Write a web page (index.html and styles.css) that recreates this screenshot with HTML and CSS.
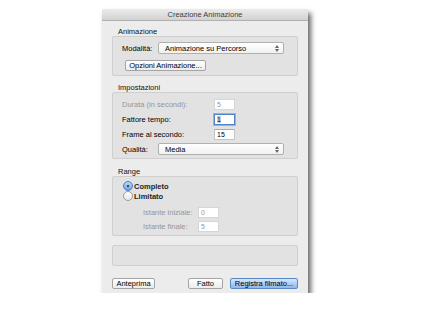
FILE: index.html
```html
<!DOCTYPE html>
<html lang="it">
<head>
    <meta charset="UTF-8">
    <title>Creazione Animazione</title>
    <link rel="stylesheet" href="styles.css">
</head>
<body>

    <div class="dialog">
        <div class="titlebar">Creazione Animazione</div>

        <div class="content">
            <div class="group-label">Animazione</div>
            <div class="group group-anim">
                <div class="row">
                    <span class="lbl lbl-short">Modalità:</span>
                    <div class="popup">
                        <span>Animazione su Percorso</span>
                        <svg class="arrows" width="4" height="7" viewBox="0 0 4 7"><path d="M0 3 L2 0 L4 3 Z M0 4 L2 7 L4 4 Z" fill="#666"/></svg>
                    </div>
                </div>
                <div class="btn btn-options">Opzioni Animazione...</div>
            </div>

            <div class="group-label">Impostazioni</div>
            <div class="group group-settings">
                <div class="row">
                    <span class="lbl lbl-long disabled">Durata (in secondi):</span>
                    <div class="field disabled">5</div>
                </div>
                <div class="row">
                    <span class="lbl lbl-long">Fattore tempo:</span>
                    <div class="field focused"><span class="sel">1</span></div>
                </div>
                <div class="row">
                    <span class="lbl lbl-long">Frame al secondo:</span>
                    <div class="field">15</div>
                </div>
                <div class="row">
                    <span class="lbl lbl-short">Qualità:</span>
                    <div class="popup">
                        <span>Media</span>
                        <svg class="arrows" width="4" height="7" viewBox="0 0 4 7"><path d="M0 3 L2 0 L4 3 Z M0 4 L2 7 L4 4 Z" fill="#666"/></svg>
                    </div>
                </div>
            </div>

            <div class="group-label">Range</div>
            <div class="group group-range">
                <div class="radio-row">
                    <span class="radio checked"></span>
                    <span>Completo</span>
                </div>
                <div class="radio-row">
                    <span class="radio"></span>
                    <span>Limitato</span>
                </div>
                <div class="row sub-row">
                    <span class="lbl lbl-sub disabled">Istante iniziale:</span>
                    <div class="field disabled">0</div>
                </div>
                <div class="row sub-row">
                    <span class="lbl lbl-sub disabled">Istante finale:</span>
                    <div class="field disabled">5</div>
                </div>
            </div>

            <div class="group group-empty"></div>

            <div class="buttons">
                <div class="btn btn-preview">Anteprima</div>
                <div class="btn btn-done">Fatto</div>
                <div class="btn btn-default">Registra filmato...</div>
            </div>
        </div>
    </div>

</body>
</html>
```

FILE: styles.css
```css
body {
    margin: 0;
    padding: 0;
    background-color: #fff;
    font-family: "Liberation Sans", Arial, sans-serif;
    font-size: 7.5px;
    color: #000;
}

.dialog {
    width: 206px;
    height: 284px;
    margin: 9px 0 0 102px;
    background-color: #ececec;
    box-shadow: 3px 4px 5px rgba(0, 0, 0, 0.6);
    box-sizing: border-box;
}

.titlebar {
    height: 12px;
    line-height: 12px;
    text-align: center;
    color: #404040;
    background: linear-gradient(#ebebeb, #d2d2d2);
    border-bottom: 1px solid #b0b0b0;
    box-sizing: border-box;
}

.content {
    padding: 7px 10px 0 10px;
}

.group-label {
    height: 8px;
    line-height: 8px;
    padding-left: 6px;
    color: #111;
}

.group {
    background-color: #e2e2e2;
    border: 1px solid #cfcfcf;
    border-radius: 2px;
    box-sizing: border-box;
}

.group-anim {
    height: 40px;
    padding: 6px 13px 0 9px;
    margin-bottom: 8px;
}

.group-settings {
    height: 67px;
    padding: 6px 13px 0 9px;
    margin-bottom: 9px;
}

.group-range {
    height: 60px;
    padding: 4px 13px 0 10px;
}

.group-empty {
    height: 21px;
    margin-top: 9px;
}

.row {
    display: flex;
    align-items: center;
    height: 10px;
    margin-bottom: 5px;
}

.lbl {
    flex: none;
}

.lbl-short {
    width: 36px;
}

.lbl-long {
    width: 92px;
}

.lbl-sub {
    width: 55px;
}

.disabled {
    color: #969696;
}

.popup {
    flex: 1;
    height: 10px;
    display: flex;
    align-items: center;
    justify-content: space-between;
    padding: 0 4px 0 6px;
    background: linear-gradient(#ffffff, #f1f1f1);
    border: 1px solid #b0b0b0;
    border-radius: 2px;
    box-sizing: content-box;
    color: #000;
}

.arrows {
    display: block;
}

.field {
    width: 17px;
    height: 9px;
    line-height: 9px;
    padding-left: 2px;
    background-color: #fff;
    border: 1px solid #c4c4c4;
    border-top-color: #a8a8a8;
    font-size: 7px;
}

.field.disabled {
    border-color: #d6d6d6;
}

.field.focused {
    border: 1px solid #4f82c8;
    box-shadow: 0 0 0 1px #8fb4e6;
}

.sel {
    background-color: #b5d3f7;
}

.btn {
    height: 9px;
    line-height: 9px;
    text-align: center;
    background: linear-gradient(#ffffff, #ececec);
    border: 1px solid #a5a5a5;
    border-radius: 2px;
    color: #000;
}

.btn-options {
    width: 79px;
    margin-top: 7px;
    margin-left: 3px;
}

.radio-row {
    display: flex;
    align-items: center;
    gap: 1px;
    height: 10px;
    font-weight: bold;
    color: #222;
}

.radio {
    width: 8px;
    height: 8px;
    border-radius: 50%;
    border: 1px solid #9c9c9c;
    background: linear-gradient(#ffffff, #e8e8e8);
    position: relative;
}

.radio.checked {
    border-color: #4a7fc4;
    background: linear-gradient(#bcd6f5, #6f9fdc);
}

.radio.checked::after {
    content: "";
    position: absolute;
    left: 3px;
    top: 3px;
    width: 2px;
    height: 2px;
    border-radius: 50%;
    background-color: #1a2a40;
}

.sub-row {
    padding-left: 20px;
    margin-bottom: 4px;
}

.radio-row + .radio-row {
    margin-bottom: 6px;
}

.buttons {
    display: flex;
    margin-top: 12px;
}

.btn-preview {
    width: 41px;
}

.btn-done {
    width: 33px;
    margin-left: auto;
}

.btn-default {
    width: 66px;
    margin-left: 7px;
    border-color: #5a88c6;
    background: linear-gradient(#d5e6fb, #8db7ea);
}
```
